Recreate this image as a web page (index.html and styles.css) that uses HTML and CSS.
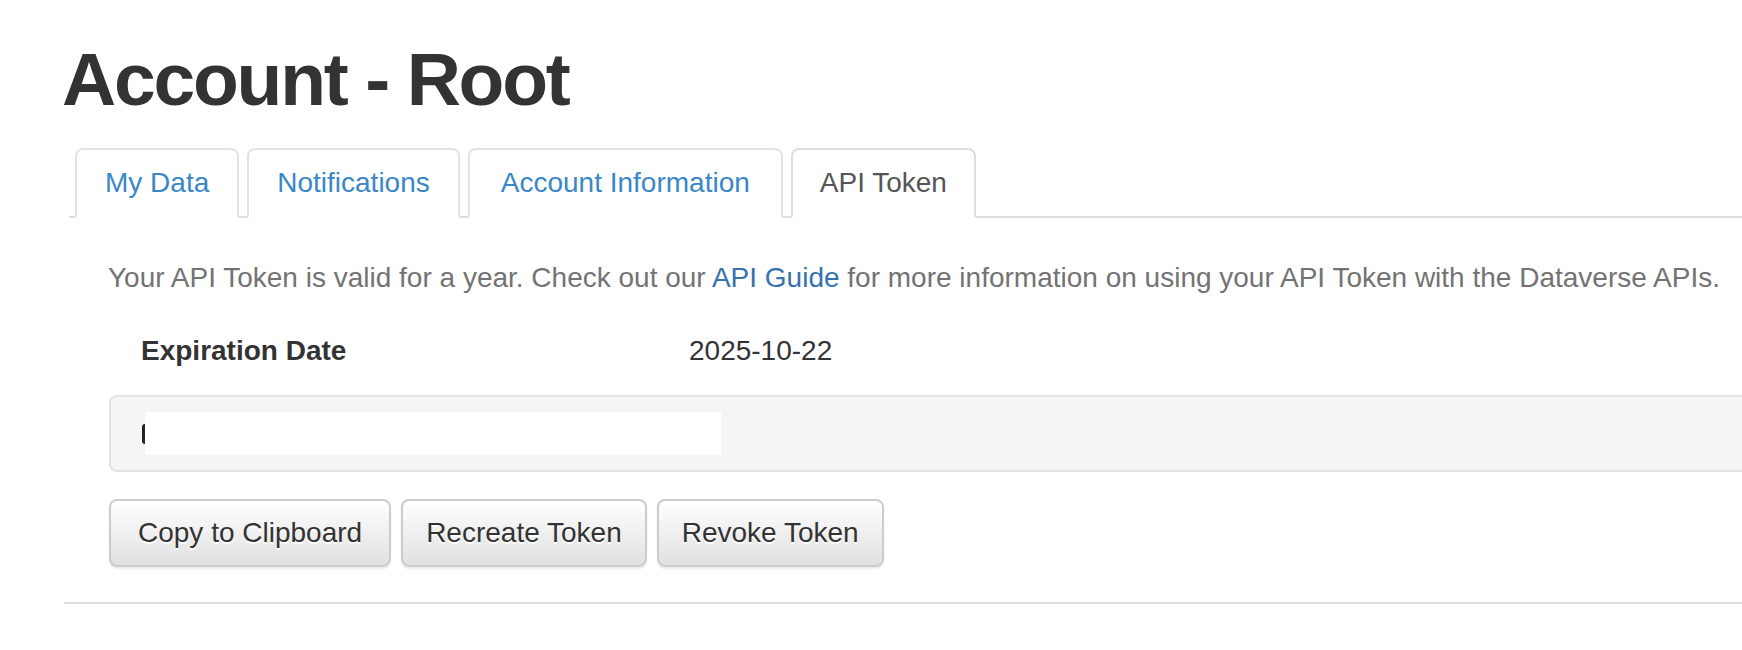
FILE: index.html
```html
<!DOCTYPE html>
<html lang="en">
<head>
<meta charset="utf-8">
<title>Account - Root</title>
<link rel="stylesheet" href="styles.css">
</head>
<body>
<div class="page">
  <h1 class="title">Account - Root</h1>
  <ul class="nav-tabs">
    <li class="tab"><a href="#">My Data</a></li>
    <li class="tab"><a href="#">Notifications</a></li>
    <li class="tab tab-wide"><a href="#">Account Information</a></li>
    <li class="tab active"><a href="#">API Token</a></li>
  </ul>
  <div class="tab-content">
    <p class="intro">Your API Token is valid for a year. Check out our <a class="link" href="#">API Guide</a> for more information on using your API Token with the Dataverse APIs.</p>
    <div class="exp-row">
      <span class="exp-label">Expiration Date</span>
      <span class="exp-value">2025-10-22</span>
    </div>
    <div class="token-box">
      <span class="token"><span class="token-sliver"></span><span class="token-mask"></span></span>
    </div>
    <div class="actions">
      <button class="btn btn-wide">Copy to Clipboard</button>
      <button class="btn">Recreate Token</button>
      <button class="btn">Revoke Token</button>
    </div>
  </div>
  <hr class="rule">
</div>
</body>
</html>
```
FILE: styles.css
```css
html, body {
  margin: 0;
  padding: 0;
  background: #fff;
}
body {
  font-family: "Liberation Sans", Arial, Helvetica, sans-serif;
  font-size: 28px;
  line-height: 40px;
  color: #333;
  overflow: hidden;
}
.page {
  padding-left: 64px;
  width: 1760px;
}
.title {
  margin: 38px 0 0 -2px;
  font-size: 75px;
  font-weight: 700;
  line-height: 82px;
  letter-spacing: -2.2px;
  color: #333;
}
.nav-tabs {
  list-style: none;
  margin: 28px 0 0 5px;
  padding: 0 0 0 6px;
  display: flex;
  gap: 8px;
  border-bottom: 2px solid #ddd;
}
.tab {
  margin-bottom: -2px;
}
.tab a {
  display: block;
  padding: 13px 28px;
  line-height: 40px;
  border: 2px solid #e3e3e3;
  border-bottom-color: transparent;
  border-radius: 8px 8px 0 0;
  color: #3a87c8;
  text-decoration: none;
  background: #fff;
}
.tab-wide a {
  padding: 13px 31px;
}
.tab.active a {
  padding: 13px 27px;
  color: #555;
  border-color: #ddd;
  border-bottom-color: #fff;
}
.tab-content {
  padding-left: 44px;
}
.intro {
  margin: 40px 0 0 0;
  color: #737373;
  white-space: nowrap;
}
.link {
  color: #3572ae;
  text-decoration: none;
}
.exp-row {
  display: flex;
  margin-top: 33px;
  padding-left: 33px;
}
.exp-label {
  font-weight: 700;
  width: 548px;
}
.exp-value {
  color: #333;
}
.token-box {
  margin-top: 24px;
  margin-left: 1px;
  height: 43px;
  padding: 15px 0 15px 31px;
  background: #f5f5f7;
  border: 2px solid #e3e3e6;
  border-right: none;
  border-radius: 8px 0 0 8px;
}
.token {
  display: flex;
  align-items: center;
  height: 43px;
}
.token-sliver {
  display: block;
  width: 3px;
  height: 20px;
  border-radius: 3px 0 0 3px;
  background: #222;
}
.token-mask {
  display: block;
  width: 576px;
  height: 43px;
  background: #fff;
}
.actions {
  display: flex;
  gap: 10px;
  margin-top: 27px;
  margin-left: 1px;
}
.btn {
  font-family: "Liberation Sans", Arial, Helvetica, sans-serif;
  font-size: 28px;
  line-height: 40px;
  padding: 12px 23px;
  color: #333;
  background: linear-gradient(to bottom, #fff 0%, #e0e0e0 100%);
  border: 2px solid #ccc;
  border-radius: 8px;
  box-shadow: inset 0 2px 0 rgba(255,255,255,0.15), 0 2px 2px rgba(0,0,0,0.075);
  text-shadow: 0 2px 0 #fff;
  cursor: pointer;
}
.btn-wide {
  padding: 12px 27px;
}
.rule {
  margin: 35px 0 0 0;
  border: 0;
  border-top: 2px solid #ddd;
  height: 0;
}
```
